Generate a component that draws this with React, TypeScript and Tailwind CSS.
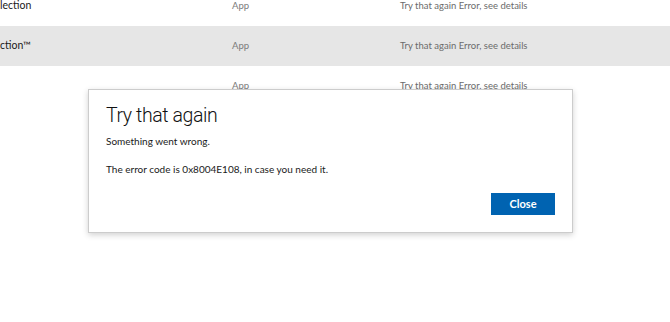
import React from "react";

const rows = [
  { name: "lection", type: "App", status: "Try that again Error, see details", active: false },
  { name: "ction™", type: "App", status: "Try that again Error, see details", active: true },
  { name: "", type: "App", status: "Try that again Error, see details", active: false },
];

const App: React.FC = () => {
  return (
    <div className="relative w-[670px] h-[322px] overflow-hidden bg-white font-['Lato',sans-serif]">
      <div className="-mt-[14px]">
        {rows.map((r, i) => (
          <div
            key={i}
            className={`flex items-center h-10 text-[9.5px] ${r.active ? "bg-[#e6e6e6]" : ""}`}
          >
            <span className="w-[232px] text-[10.5px] text-[#1a1a1a]">{r.name}</span>
            <span className="w-[168px] text-[#7a7a7a]">{r.type}</span>
            <span className="text-[#6b6b6b]">{r.status}</span>
          </div>
        ))}
      </div>

      <div className="absolute left-[88px] top-[89px] w-[485px] h-[144px] bg-white border border-[#cccccc] shadow-[0_2px_6px_rgba(0,0,0,0.18)] flex flex-col px-[17px] pt-[11px] pb-[17px]">
        <h1 className="font-['Roboto',sans-serif] text-[19.5px] font-light tracking-[-0.4px] text-[#111] leading-[30px]">
          Try that again
        </h1>
        <p className="text-[10px] text-[#1a1a1a] leading-[14px] mt-[3px]">Something went wrong.</p>
        <p className="text-[10px] text-[#1a1a1a] leading-[14px] mt-[14px]">
          The error code is 0x8004E108, in case you need it.
        </p>
        <div className="mt-auto flex justify-end">
          <button className="w-[64px] h-[22px] bg-[#0063b1] text-white text-[11px] font-bold">
            Close
          </button>
        </div>
      </div>
    </div>
  );
};

export default App;
